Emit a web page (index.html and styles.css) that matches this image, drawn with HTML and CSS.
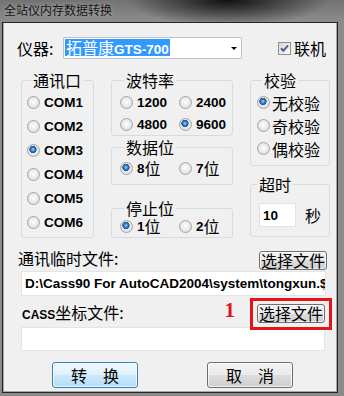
FILE: index.html
```html
<!DOCTYPE html>
<html lang="zh-CN">
<head>
    <meta charset="UTF-8">
    <meta name="viewport" content="width=device-width, initial-scale=1.0">
    <title>全站仪内存数据转换</title>
    <link rel="stylesheet" href="styles.css">
</head>
<body>
    <div class="titlebar">全站仪内存数据转换</div>
    <div class="window">
        <div class="device-row">
            <label class="device-label">仪器:</label>
            <div class="combo">
                <span class="combo-text">拓普康<b class="en">GTS-700</b></span>
                <span class="combo-arrow"></span>
            </div>
            <label class="online">
                <span class="check">
                    <svg width="11" height="11" viewBox="0 0 11 11"><path d="M2 5.2 L4.4 7.8 L9 2.4" fill="none" stroke="#4b5f8f" stroke-width="2"/></svg>
                </span>联机
            </label>
        </div>

        <div class="groups">
            <fieldset class="box port">
                <legend>通讯口</legend>
                <label class="opt"><input type="radio" name="port"><span class="en">COM1</span></label>
                <label class="opt"><input type="radio" name="port"><span class="en">COM2</span></label>
                <label class="opt"><input type="radio" name="port" checked><span class="en">COM3</span></label>
                <label class="opt"><input type="radio" name="port"><span class="en">COM4</span></label>
                <label class="opt"><input type="radio" name="port"><span class="en">COM5</span></label>
                <label class="opt"><input type="radio" name="port"><span class="en">COM6</span></label>
            </fieldset>

            <div class="stack">
                <fieldset class="box baud">
                    <legend>波特率</legend>
                    <div class="pair">
                        <label class="opt"><input type="radio" name="baud"><span class="en">1200</span></label>
                        <label class="opt"><input type="radio" name="baud"><span class="en">2400</span></label>
                        <label class="opt"><input type="radio" name="baud"><span class="en">4800</span></label>
                        <label class="opt"><input type="radio" name="baud" checked><span class="en">9600</span></label>
                    </div>
                </fieldset>
                <fieldset class="box bits">
                    <legend>数据位</legend>
                    <div class="pair">
                        <label class="opt"><input type="radio" name="bits" checked><span class="en">8</span>位</label>
                        <label class="opt"><input type="radio" name="bits"><span class="en">7</span>位</label>
                    </div>
                </fieldset>
                <fieldset class="box stop">
                    <legend>停止位</legend>
                    <div class="pair">
                        <label class="opt"><input type="radio" name="stop" checked><span class="en">1</span>位</label>
                        <label class="opt"><input type="radio" name="stop"><span class="en">2</span>位</label>
                    </div>
                </fieldset>
            </div>

            <div class="stack">
                <fieldset class="box parity">
                    <legend>校验</legend>
                    <label class="opt"><input type="radio" name="parity" checked>无校验</label>
                    <label class="opt"><input type="radio" name="parity">奇校验</label>
                    <label class="opt"><input type="radio" name="parity">偶校验</label>
                </fieldset>
                <fieldset class="box timeout">
                    <legend>超时</legend>
                    <div class="timeout-row">
                        <input class="num" type="text" value="10">
                        <span class="unit">秒</span>
                    </div>
                </fieldset>
            </div>
        </div>

        <div class="file-row temp">
            <span class="file-label">通讯临时文件:</span>
            <button class="btn small">选择文件</button>
        </div>
        <div class="field path">D:\Cass90 For AutoCAD2004\system\tongxun.$$$</div>

        <div class="file-row cass">
            <span class="file-label"><span class="caps">CASS</span>坐标文件:</span>
            <span class="mark">1</span>
            <span class="marked"><button class="btn small">选择文件</button></span>
        </div>
        <div class="field empty"></div>

        <div class="actions">
            <button class="btn big default">转　换</button>
            <button class="btn big">取　消</button>
        </div>
    </div>
</body>
</html>
```

FILE: styles.css
```css
body {
    margin: 0;
    width: 344px;
    height: 396px;
    overflow: hidden;
    background-color: #8a8a8a;
    font-family: "Noto Sans CJK SC", sans-serif;
    font-size: 16px;
    color: #000;
}
.titlebar {
    box-sizing: border-box;
    height: 22px;
    padding-left: 4px;
    font-size: 12px;
    line-height: 19px;
    color: #161616;
    text-shadow: 0 0 5px rgba(255, 255, 255, 0.45);
    background: radial-gradient(ellipse 100px 26px at 228px 0, rgba(0, 0, 0, 0.85), rgba(0, 0, 0, 0)),
                linear-gradient(#727272, #8c8c8c);
}
.window {
    box-sizing: border-box;
    width: 336px;
    height: 371px;
    margin-left: 2px;
    padding-left: 1px;
    border: 1px solid #262626;
    background-color: #f0f0f0;
    box-shadow: inset 1px 0 0 #a8a8a8, inset -1px 0 0 #a8a8a8, inset 0 -1px 0 #a8a8a8;
}
.en {
    font-family: "Liberation Sans", Arial, sans-serif;
    font-weight: bold;
    font-size: 13.5px;
}

/* instrument row */
.device-row {
    display: flex;
    align-items: center;
    height: 22px;
    margin-top: 14px;
    padding-left: 13px;
}
.device-label {
    width: 46px;
    line-height: 22px;
}
.combo {
    box-sizing: border-box;
    display: flex;
    justify-content: space-between;
    align-items: center;
    width: 179px;
    height: 22px;
    border: 1px solid #b7c1cd;
    border-radius: 2px;
    background-color: #fff;
}
.combo-text {
    align-self: flex-start;
    height: 17px;
    margin: 1px 0 0 1px;
    padding: 0 1px;
    line-height: 17px;
    background-color: #3399ff;
    color: #fff;
    white-space: nowrap;
}
.combo-arrow {
    width: 0;
    height: 0;
    margin: 1px 4px 0 0;
    border-left: 3px solid transparent;
    border-right: 3px solid transparent;
    border-top: 3px solid #000;
}
.online {
    display: flex;
    align-items: center;
    margin-left: 36px;
    line-height: 22px;
}
.check {
    box-sizing: border-box;
    display: flex;
    align-items: center;
    justify-content: center;
    width: 13px;
    height: 13px;
    margin-right: 3px;
    border: 1px solid #8f8f8f;
    background: linear-gradient(135deg, #d8d8d8, #fafafa);
}

/* group boxes */
.groups {
    display: grid;
    grid-template-columns: 73px 122px 80px;
    column-gap: 17px;
    align-items: start;
    margin-top: 13px;
    padding-left: 17px;
}
.box {
    margin: 0;
    padding: 0;
    min-width: 0;
    border: 1px solid #d3dce2;
    border-radius: 3px;
}
.box legend {
    margin-left: 4px;
    padding: 0 2px;
    line-height: 16px;
}
.opt {
    display: flex;
    align-items: center;
    height: 24px;
    white-space: nowrap;
}
.opt input {
    -webkit-appearance: none;
    appearance: none;
    box-sizing: border-box;
    flex: none;
    width: 13px;
    height: 13px;
    margin: 0 4px 0 0;
    border: 1px solid #a4a4a4;
    border-radius: 50%;
    background: radial-gradient(circle at 50% 45%, #ffffff 0, #ececec 45%, #d2d2d2 100%);
}
.opt input:checked {
    background: radial-gradient(circle at 45% 40%, #b2dbfb 0, #3f8ad2 1.6px, #1a5596 3.4px, rgba(26, 85, 150, 0) 3.9px),
                radial-gradient(circle at 50% 45%, #ffffff 0, #ececec 45%, #d2d2d2 100%);
}
.port {
    padding: 2px 0 3px 5px;
}
.pair {
    display: grid;
    grid-template-columns: 59px auto;
}
.baud {
    padding: 3px 0 0 8px;
}
.baud .opt {
    height: 22px;
}
.bits {
    margin-top: 3px;
    padding: 1px 0 4px 8px;
}
.stop {
    margin-top: 15px;
    padding: 1px 0 2px 8px;
}
.stop .opt {
    height: 18px;
}
.parity {
    padding: 3px 0 5px 6px;
}
.parity legend {
    margin-left: 5px;
}
.parity .opt {
    height: 23px;
}
.parity .opt input {
    margin-right: 2px;
}
.timeout {
    margin-top: 10px;
}
.timeout legend {
    margin-left: 6px;
}
.timeout-row {
    display: flex;
    align-items: center;
    padding: 11px 0 9px 8px;
}
.num {
    box-sizing: border-box;
    width: 37px;
    height: 24px;
    margin: 0;
    padding: 0 0 0 3px;
    border: 1px solid #e3e3e3;
    background-color: #fff;
    font-family: "Liberation Sans", Arial, sans-serif;
    font-weight: bold;
    font-size: 13.5px;
    color: #000;
}
.unit {
    margin-left: 9px;
}

/* file rows */
.file-row {
    display: flex;
    align-items: flex-start;
}
.file-row.temp {
    justify-content: space-between;
    margin-top: 11px;
    padding: 0 10px 0 14px;
}
.file-row.temp .file-label {
    line-height: 18px;
}
.file-row.temp .btn {
    margin-top: 2px;
}
.file-row.cass {
    align-items: center;
    height: 19px;
    margin-top: 8px;
    padding: 0 12px 0 18px;
}
.file-row.cass .file-label {
    line-height: 19px;
}
.caps {
    font-family: "Liberation Sans", Arial, sans-serif;
    font-weight: bold;
    font-size: 12px;
}
.mark {
    align-self: flex-start;
    margin: -3px 22px 0 auto;
    font-family: "Liberation Serif", serif;
    font-weight: bold;
    font-size: 21px;
    line-height: 19px;
    color: #e3151c;
}
.marked {
    position: relative;
    display: flex;
}
.marked::after {
    content: "";
    position: absolute;
    top: -6px;
    right: -7px;
    bottom: -7px;
    left: -7px;
    border: 3px solid #e3151c;
}
.field {
    box-sizing: border-box;
    margin-left: 17px;
    border: 1px solid #e4e4e4;
    background-color: #fff;
}
.path {
    width: 305px;
    height: 25px;
    margin-top: 1px;
    padding-left: 3px;
    overflow: hidden;
    white-space: nowrap;
    line-height: 23px;
    font-family: "Liberation Sans", Arial, sans-serif;
    font-weight: bold;
    font-size: 13.5px;
}
.empty {
    width: 304px;
    height: 24px;
    margin-top: 4px;
}

/* buttons */
.btn {
    box-sizing: border-box;
    padding: 0;
    border: 1px solid #707070;
    border-radius: 3px;
    background: linear-gradient(#f2f2f2, #ebebeb 50%, #dddddd 50%, #cfcfcf);
    box-shadow: inset 0 0 0 1px rgba(255, 255, 255, 0.7);
    font-family: "Noto Sans CJK SC", sans-serif;
    font-size: 16px;
    color: #000;
    white-space: nowrap;
}
.small {
    width: 68px;
    height: 19px;
    line-height: 17px;
}
.big {
    width: 86px;
    height: 26px;
    line-height: 24px;
}
.default {
    border-color: #3c7fb1;
    background: linear-gradient(#eef7fd, #dff1fc 50%, #c9e9fb 50%, #b5def6);
}
.actions {
    display: flex;
    gap: 69px;
    margin-top: 11px;
    padding-left: 48px;
}
```
